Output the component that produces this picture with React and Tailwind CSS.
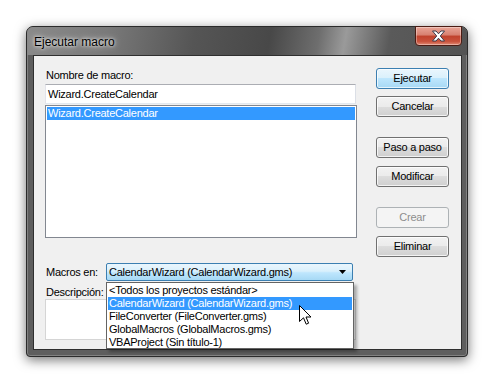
import React from 'react';

const Btn = ({ children, variant, className = '' }) => {
    const base = 'w-[73px] h-[21px] rounded-[3px] border flex items-center justify-center text-[11px] leading-none';
    if (variant === 'default') {
        return (
            <div className={`${base} border-[#3c7fb1] bg-[linear-gradient(#eaf6fd_0%,#d9f0fc_50%,#bee6fd_50%,#a7d9f5_100%)] shadow-[inset_0_0_0_1px_rgba(255,255,255,0.7)] text-black ${className}`}>{children}</div>
        );
    }
    if (variant === 'disabled') {
        return (
            <div className={`${base} border-[#adb2b5] bg-[#f4f4f4] text-[#8d8d8d] ${className}`}>{children}</div>
        );
    }
    return (
        <div className={`${base} border-[#707070] bg-[linear-gradient(#f2f2f2_0%,#ebebeb_50%,#dddddd_50%,#cfcfcf_100%)] shadow-[inset_0_0_0_1px_rgba(255,255,255,0.75)] text-black ${className}`}>{children}</div>
    );
};

const items = [
    '<Todos los proyectos estándar>',
    'CalendarWizard (CalendarWizard.gms)',
    'FileConverter (FileConverter.gms)',
    'GlobalMacros (GlobalMacros.gms)',
    'VBAProject (Sin título-1)',
];

export default function App() {
    return (
        <div className="w-[491px] h-[392px] bg-white pl-[26px] pt-[26px] font-['Liberation_Sans',Arial,sans-serif] tracking-[-0.25px] relative overflow-hidden">
            {/* window */}
            <div className="relative w-[442px] h-[331px] border border-[#2b2b2b] rounded-t-[7px] rounded-b-[4px] bg-[#5e5e5e] shadow-[0_3px_12px_rgba(0,0,0,0.55),inset_0_0_0_1px_rgba(255,255,255,0.22)] pl-[6px] pr-[5px] pb-[5px] flex flex-col">
                <div className="absolute inset-x-0 top-0 h-[28px] rounded-t-[6px] bg-[linear-gradient(100deg,#8a8a8a_0%,#7a7a7a_18%,#555555_38%,#484848_55%,#6e6e6e_66%,#9a9a9a_72%,#5a5a5a_82%,#535353_100%)]" />
                <div className="relative h-[28px] flex items-center pl-[1px] pt-[2px]">
                    <span className="text-[12px] tracking-normal text-black [text-shadow:0_0_6px_rgba(255,255,255,0.9),0_0_3px_rgba(255,255,255,0.9)]">Ejecutar macro</span>
                </div>
                {/* close button */}
                <div className="absolute top-[-1px] right-[5px] w-[47px] h-[20px] rounded-b-[4px] border border-[#4a1c14] bg-[linear-gradient(#e9a597_0%,#d7806f_45%,#c0422c_50%,#c9523c_80%,#e08a74_100%)] shadow-[inset_0_0_0_1px_rgba(255,255,255,0.35)] flex items-center justify-center">
                    <svg width="15" height="12" viewBox="0 0 15 12">
                        <path d="M1.5 1 L5 1 L7.5 3.8 L10 1 L13.5 1 L9.3 6 L13.5 11 L10 11 L7.5 8.2 L5 11 L1.5 11 L5.7 6 Z" fill="#ffffff" stroke="#3b3b4a" strokeWidth="1" strokeLinejoin="round" />
                    </svg>
                </div>

                {/* client area */}
                <div className="relative flex w-[429px] h-[295px] bg-[#f0f0f0] border border-[#2f2f2f] pl-[11px] pt-[12px]">
                    <div className="flex flex-col w-[312px]">
                        <div className="h-[14px] text-[11px] leading-[14px] pl-[1px] text-black">Nombre de macro:</div>
                        <div className="mt-[2px] w-[311px] h-[20px] border border-[#abadb3] border-l-[#e2e3ea] border-r-[#dbdfe6] border-b-[#e3e9ef] bg-white flex items-center pl-[2px] text-[11px]">Wizard.CreateCalendar</div>
                        <div className="mt-[1px] w-[312px] h-[133px] border border-[#828790] bg-white p-[1px]">
                            <div className="h-[13px] bg-[#3399ff] text-white text-[11px] leading-[13px] pl-[1px]">Wizard.CreateCalendar</div>
                        </div>
                        <div className="mt-[25px] h-[18px] flex items-center">
                            <div className="w-[61px] text-[11px] pl-[1px]">Macros en:</div>
                            <div className="w-[247px] h-[18px] rounded-[2px] border border-[#3c7fb1] bg-[linear-gradient(#eaf6fd_0%,#d9f0fc_45%,#bee6fd_55%,#a7d9f5_100%)] flex items-center pl-[2px] pr-[6px] text-[11px]">
                                <span className="flex-1">CalendarWizard (CalendarWizard.gms)</span>
                                <svg width="7" height="4" viewBox="0 0 7 4"><path d="M0 0 L7 0 L3.5 4 Z" fill="#000" /></svg>
                            </div>
                        </div>
                        <div className="mt-[4px] h-[14px] text-[11px] leading-[14px] pl-[1px]">Descripción:</div>
                        <div className="w-[311px] h-[41px] border border-[#d5d5d5] bg-white" />
                    </div>

                    <div className="ml-[19px] flex flex-col">
                        <Btn variant="default">Ejecutar</Btn>
                        <Btn className="mt-[7px]">Cancelar</Btn>
                        <Btn className="mt-[20px]">Paso a paso</Btn>
                        <Btn className="mt-[8px]">Modificar</Btn>
                        <Btn variant="disabled" className="mt-[20px]">Crear</Btn>
                        <Btn className="mt-[8px]">Eliminar</Btn>
                    </div>

                    {/* open dropdown */}
                    <div className="absolute left-[72px] top-[226px] w-[248px] h-[67px] border border-[#646464] bg-white p-[1px] shadow-[3px_3px_3px_rgba(0,0,0,0.3)]">
                        {items.map((it, i) => (
                            <div key={it} className={`h-[13px] text-[11px] leading-[13px] pl-[1px] ${i === 1 ? 'bg-[#3399ff] text-white' : 'text-black'}`}>{it}</div>
                        ))}
                    </div>
                </div>
            </div>

            {/* mouse cursor */}
            <svg className="absolute left-[299px] top-[305px]" width="13" height="21" viewBox="0 0 13 21">
                <path d="M0.5 0.5 L0.5 16.5 L4.5 12.8 L7.2 19.2 L9.6 18.2 L7 12 L12 12 Z" fill="#ffffff" stroke="#000000" strokeWidth="1" strokeLinejoin="miter" />
            </svg>
        </div>
    );
}
